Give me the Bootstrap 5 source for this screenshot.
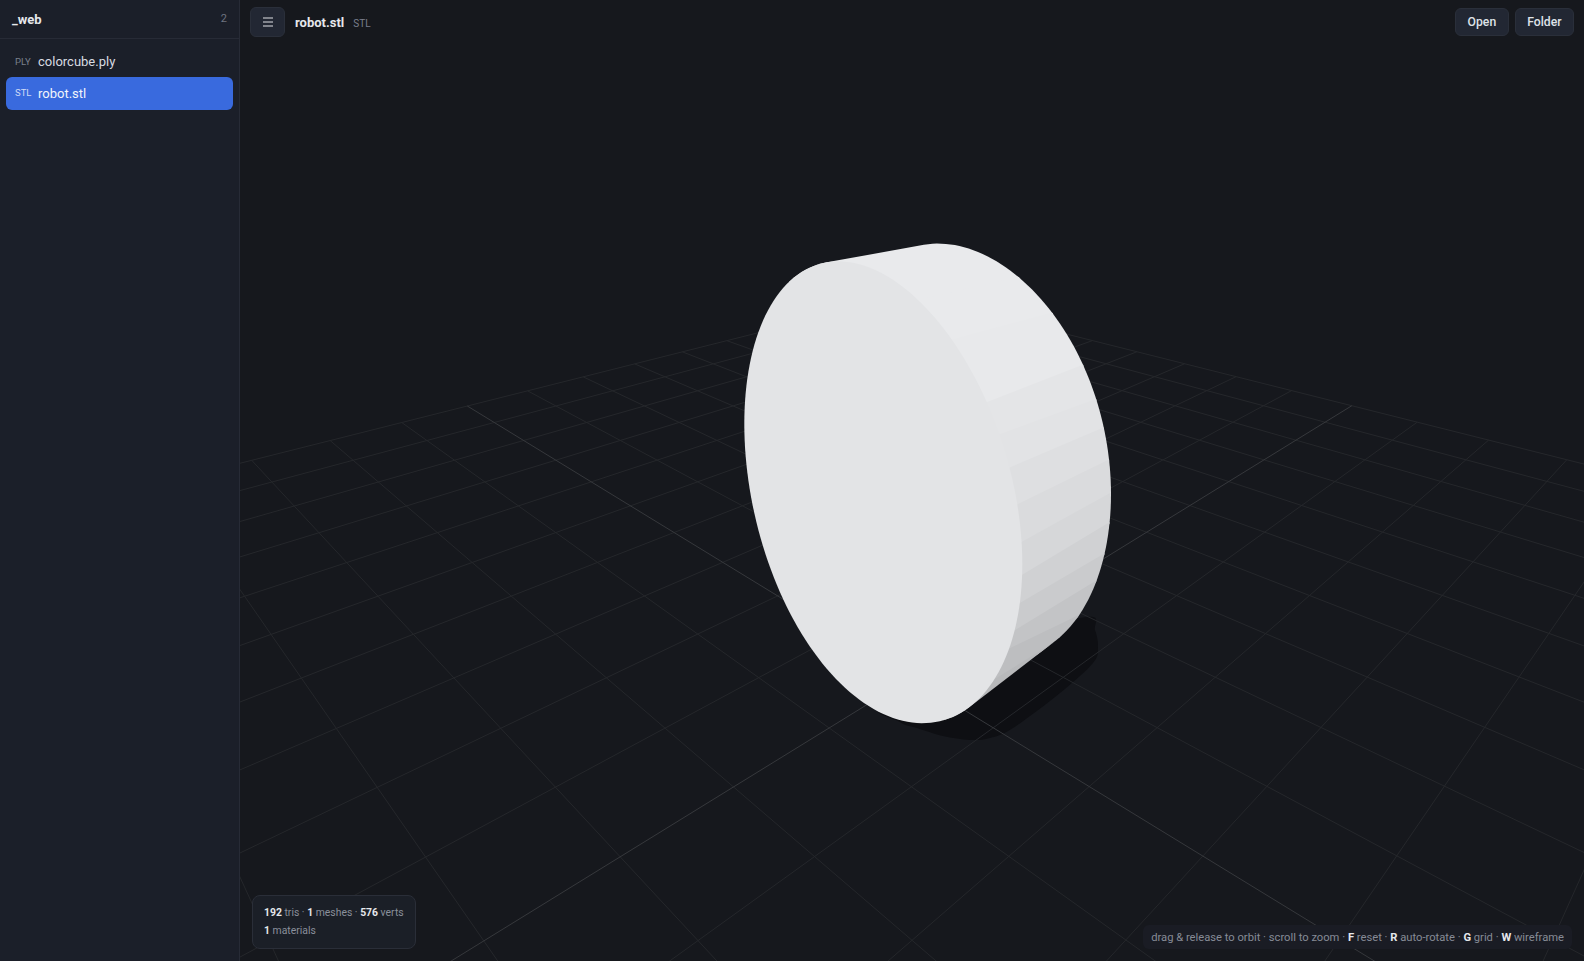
<!DOCTYPE html>
<html lang="en">
  <head>
    <meta charset="UTF-8" />
    <meta name="viewport" content="width=device-width, initial-scale=1.0" />
    <title>robot.stl</title>
    <link
      href="https://cdn.jsdelivr.net/npm/bootstrap@5.3.3/dist/css/bootstrap.min.css"
      rel="stylesheet"
    />
    <style>
      body {
        background: #16181d;
        color: #e6e8ec;
        font-family: Roboto, "Liberation Sans", sans-serif;
        font-size: 13px;
        overflow: hidden;
      }
      .side-panel {
        width: 240px;
        background: #1b1f29;
        border-right: 1px solid #272b36;
      }
      .side-head {
        height: 39px;
        padding: 1px 12px 0;
        border-bottom: 1px solid #272b36;
      }
      .side-title { font-weight: 700; color: #e6e8ec; }
      .side-count { font-size: 11px; color: #6e7380; }
      .file-list { padding: 7px 6px 0; }
      .file-row {
        height: 32px;
        padding: 0 9px;
        gap: 7px;
        border-radius: 6px;
        color: #d8dbe1;
      }
      .file-row.is-active {
        height: 33px;
        margin-top: -1px;
        background: #396ade;
        color: #f2f5fb;
      }
      .file-tag { width: 16px; font-size: 9.5px; color: #7a7f8c; }
      .is-active .file-tag { color: #cfdaf6; }
      .viewer { background: #16181d; }
      .scene { top: 0; left: 0; width: 100%; height: 100%; }
      .top-bar { padding: 7px 10px 0; gap: 6px; }
      .tool-btn {
        height: 28px;
        padding: 0 11.5px;
        margin-top: 1px;
        background: #222733;
        border: 1px solid #2a2f3a;
        border-radius: 6px;
        color: #dfe2e8;
        font-size: 12.2px;
        font-weight: 500;
      }
      .menu-btn {
        width: 35px;
        height: 30px;
        padding: 0;
        margin-top: 0;
      }
      .view-title { height: 30px; padding-top: 2px; margin-left: 4px; }
      .view-name { font-weight: 700; }
      .view-ext { margin-left: 9px; font-size: 10px; color: #7a7f8c; }
      .stats-box {
        left: 12px;
        bottom: 12px;
        padding: 8px 11px;
        background: #1b1f27;
        border: 1px solid #2a2e38;
        border-radius: 8px;
        font-size: 10.4px;
        line-height: 18px;
        color: #8a8f9b;
      }
      .hint-box {
        right: 12px;
        bottom: 12px;
        height: 24px;
        padding: 1px 8px 0;
        background: #1a1c24;
        border-radius: 6px;
        font-size: 11.2px;
        line-height: 24px;
        color: #868b96;
      }
      .stats-box b, .hint-box b { color: #e6e8ec; font-weight: 700; }
    </style>
  </head>
  <body>
    <div class="d-flex vh-100">
      <aside class="side-panel flex-shrink-0">
        <div class="side-head d-flex align-items-center justify-content-between">
          <span class="side-title">_web</span>
          <span class="side-count">2</span>
        </div>
        <div class="file-list">
          <div class="file-row d-flex align-items-center">
            <span class="file-tag">PLY</span><span>colorcube.ply</span>
          </div>
          <div class="file-row is-active d-flex align-items-center">
            <span class="file-tag">STL</span><span>robot.stl</span>
          </div>
        </div>
      </aside>

      <main class="viewer position-relative flex-grow-1">
        <svg class="scene position-absolute" id="scene" viewBox="240 0 1344 961"></svg>

        <div class="top-bar position-relative d-flex align-items-start">
          <button class="btn tool-btn menu-btn d-flex align-items-center justify-content-center" type="button" aria-label="Toggle sidebar">
            <svg width="10" height="10" viewBox="0 0 10 10"><path d="M0 1h10M0 5h10M0 9h10" stroke="#e0e2e6" stroke-width="1.2" /></svg>
          </button>
          <div class="view-title d-flex align-items-center">
            <span class="view-name">robot.stl</span>
            <span class="view-ext">STL</span>
          </div>
          <button class="btn tool-btn ms-auto" type="button">Open</button>
          <button class="btn tool-btn" type="button">Folder</button>
        </div>

        <div class="stats-box position-absolute">
          <b>192</b> tris · <b>1</b> meshes · <b>576</b> verts<br />
          <b>1</b> materials
        </div>
        <div class="hint-box position-absolute">
          drag &amp; release to orbit · scroll to zoom · <b>F</b> reset · <b>R</b> auto-rotate · <b>G</b> grid · <b>W</b> wireframe
        </div>
      </main>
    </div>

    <script>
      let scene = document.getElementById("scene");
      const NS = "http://www.w3.org/2000/svg";

      function add(tag, attrs, parent) {
        let el = document.createElementNS(NS, tag);
        for (let k in attrs) el.setAttribute(k, attrs[k]);
        (parent || scene).appendChild(el);
        return el;
      }

      // smooth closed outline through the traced points
      function smooth(pts) {
        let d = "M" + pts[0].join(" ");
        let n = pts.length;
        for (let i = 0; i < n; i++) {
          let p0 = pts[(i - 1 + n) % n], p1 = pts[i], p2 = pts[(i + 1) % n], p3 = pts[(i + 2) % n];
          d += "C" + (p1[0] + (p2[0] - p0[0]) / 6) + " " + (p1[1] + (p2[1] - p0[1]) / 6) + " " +
            (p2[0] - (p3[0] - p1[0]) / 6) + " " + (p2[1] - (p3[1] - p1[1]) / 6) + " " + p2[0] + " " + p2[1];
        }
        return d + "Z";
      }

      // floor shadow goes under the grid
      add("path", {
        fill: "#0e0f13",
        d: smooth([[880, 700], [900, 722], [917, 728], [943, 736], [970, 740], [990, 738], [1013, 728],
          [1060, 693], [1093, 663], [1098, 647], [1095, 630], [1087, 617], [1000, 640]])
      });

      // grid: 20 divisions, projected with a homography traced from the picture
      const H = { a: 107.5, b: -1417.6, c: 911, d: -20.6, e: -21.4, f: 677.5, g: -0.7194, h: -0.7226 };
      function project(u, v) {
        let w = H.g * u + H.h * v + 1;
        return [(H.a * u + H.b * v + H.c) / w, (H.d * u + H.e * v + H.f) / w];
      }
      function gridLine(fn, color) {
        let t0 = -1, t1 = 1;
        // cut the part behind the camera
        while (t1 > -1) {
          let q = fn(t1);
          if (H.g * q[0] + H.h * q[1] + 1 > 0.03) break;
          t1 -= 0.005;
        }
        let a = project(...fn(t0)), b = project(...fn(t1));
        add("line", { x1: a[0], y1: a[1], x2: b[0], y2: b[1], stroke: color, "stroke-width": 1 });
      }
      for (let i = -10; i <= 10; i++) {
        if (i === 0) continue;
        gridLine((t) => [t, i / 10], "#25272b");
        gridLine((t) => [i / 10, t], "#25272b");
      }
      gridLine((t) => [t, 0], "#36383c");
      gridLine((t) => [0, t], "#36383c");

      // the two cylinder caps, as ellipses fitted to the picture
      function cap(cx, cy, wx, k0, k1, l0, l1) {
        let pts = [];
        for (let i = 0; i < 180; i++) {
          let t = (i * Math.PI) / 90, c = Math.cos(t), s = Math.sin(t);
          pts.push([cx + wx * c, cy + (k0 + k1 * s) * c + (l0 + l1 * s) * s]);
        }
        return pts;
      }
      const frontCap = cap(883.3, 494, 139, 70, -6, 220, 0);
      const backCap = cap(978, 439, 133, 55, 0, 199, 12);

      function hull(pts) {
        let sorted = pts.slice().sort((p, q) => p[0] - q[0] || p[1] - q[1]);
        let cross = (o, a, b) => (a[0] - o[0]) * (b[1] - o[1]) - (a[1] - o[1]) * (b[0] - o[0]);
        let half = (list) => {
          let out = [];
          for (let p of list) {
            while (out.length > 1 && cross(out[out.length - 2], out[out.length - 1], p) <= 0) out.pop();
            out.push(p);
          }
          out.pop();
          return out;
        };
        return half(sorted).concat(half(sorted.reverse()));
      }

      let defs = add("defs", {});
      let clip = add("clipPath", { id: "bodyClip" }, defs);
      add("polygon", { points: hull(frontCap.concat(backCap)).join(" ") }, clip);
      let bands = add("g", { "clip-path": "url(#bodyClip)" });

      // side facets: front edge point, back edge point, colour of the band below
      const facets = [
        [[760, 230], [960, 190], "#e9eaec"],
        [[916.7, 300], [1017, 277], "#e9eaec"],
        [[950, 340], [1050, 313], "#e8e9eb"],
        [[988, 401.7], [1077, 367], "#e4e5e7"],
        [[1003, 433], [1093, 400], "#e2e3e5"],
        [[1011.7, 466.7], [1101.7, 428.3], "#dedfe1"],
        [[1020, 503], [1108, 460], "#dadbdd"],
        [[1022, 541.7], [1110, 493], "#d6d7d9"],
        [[1021.7, 575], [1108, 523], "#d0d1d3"],
        [[1020, 603], [1105, 553], "#cacbcd"],
        [[1015, 630], [1097, 580], "#c3c4c6"],
        [[1006, 650], [1083, 613], "#bdbec0"],
        [[993, 680], [1063, 637], "#b8b9bb"],
        [[950, 740], [1060, 690], "#b8b9bb"]
      ];
      // stretch both ways along the edge: the clip and the front cap decide where it ends
      let far = (s) => [s[1][0] + (s[1][0] - s[0][0]) * 0.4, s[1][1] + (s[1][1] - s[0][1]) * 0.4];
      let near = (s) => [s[0][0] - (s[1][0] - s[0][0]) * 0.4, s[0][1] - (s[1][1] - s[0][1]) * 0.4];
      // lower edge runs 2px under the next band, which is painted on top, so no seam shows
      let under = (p) => [p[0], p[1] + 2];
      for (let i = 0; i < facets.length - 1; i++) {
        let p = facets[i], q = facets[i + 1];
        add("polygon", {
          points: [near(p), far(p), under(far(q)), under(near(q))].join(" "),
          fill: p[2]
        }, bands);
      }
      add("polygon", { points: frontCap.join(" "), fill: "#e3e4e6" });
    </script>
    <script src="https://cdn.jsdelivr.net/npm/bootstrap@5.3.3/dist/js/bootstrap.bundle.min.js"></script>
  </body>
</html>
